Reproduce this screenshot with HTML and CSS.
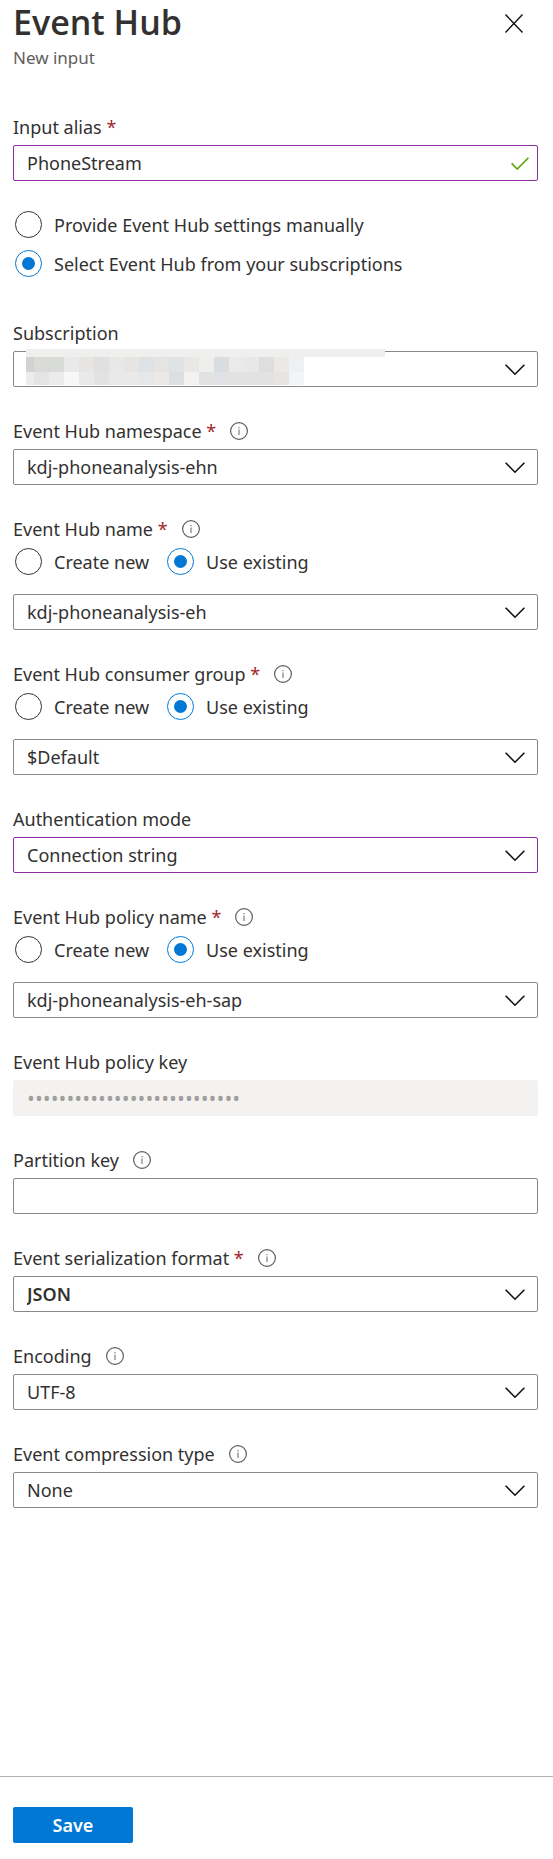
FILE: index.html
```html
<!DOCTYPE html>
<html lang="en">
<head>
<meta charset="utf-8">
<meta name="viewport" content="width=device-width, initial-scale=1">
<title>Event Hub - New input</title>
<link rel="stylesheet" href="styles.css">
</head>
<body>
<svg class="sprite" aria-hidden="true">
  <symbol id="info" viewBox="0 0 18 18">
    <circle cx="9" cy="9" r="8.4" fill="none" stroke="#605e5c" stroke-width="1.2"/>
    <path d="M9 7.5V13M9 5V6.3" fill="none" stroke="#8a8886" stroke-width="1.3"/>
  </symbol>
  <symbol id="chevron" viewBox="0 0 20 12">
    <path d="M0.6 0.8L10 10.2L19.4 0.8" fill="none" stroke="#111" stroke-width="1.6"/>
  </symbol>
</svg>
<form class="panel">
  <header class="header">
    <div>
      <h1 class="title">Event Hub</h1>
      <p class="subtitle">New input</p>
    </div>
    <button class="close" type="button" aria-label="Close">
      <svg width="18" height="19" viewBox="0 0 18 19"><path d="M0.5 0.5L17.5 18.5M17.5 0.5L0.5 18.5" fill="none" stroke="#111" stroke-width="1.4"/></svg>
    </button>
  </header>

  <main class="fields">
    <div class="field">
      <div class="caption"><label for="alias">Input alias <span class="required">*</span></label></div>
      <div class="control">
        <input class="box edited" id="alias" type="text" value="PhoneStream">
        <svg class="check" viewBox="0 0 18 13"><path d="M0.6 6.4L6.2 12L17.4 0.8" fill="none" stroke="#57a300" stroke-width="1.6"/></svg>
      </div>
    </div>

    <div class="choices stacked" role="radiogroup" aria-label="Event Hub settings">
      <label class="choice"><input class="radio" type="radio" name="source">Provide Event Hub settings manually</label>
      <label class="choice"><input class="radio" type="radio" name="source" checked>Select Event Hub from your subscriptions</label>
    </div>

    <div class="field">
      <div class="caption"><label for="subscription">Subscription</label></div>
      <div class="control">
        <select class="box" id="subscription"><option></option></select>
        <svg class="chevron"><use href="#chevron"/></svg>
        <svg class="redaction" width="359" height="36" viewBox="26 349 359 36" shape-rendering="crispEdges" aria-hidden="true">
          <path fill="#efefed" d="M26 349h359v8H26z"/>
          <path fill="#d2d2d0" d="M26 357h8v15h-8z"/>
          <path fill="#dadad8" d="M34 357h13v15H34z"/>
          <path fill="#d9dbd9" d="M47 357h17v15H47z"/>
          <path fill="#e9e9e9" d="M64 357h15v15H64z"/>
          <path fill="#e7e5e3" d="M79 357h15v15H79z"/>
          <path fill="#e0e0e0" d="M94 357h15v15H94z"/>
          <path fill="#e7e9e8" d="M109 357h15v15h-15z"/>
          <path fill="#e6e5e1" d="M124 357h15v15h-15z"/>
          <path fill="#dee2e5" d="M139 357h15v15h-15z"/>
          <path fill="#e4e4e2" d="M154 357h15v15h-15z"/>
          <path fill="#dfe3e4" d="M169 357h15v15h-15z"/>
          <path fill="#eae8e6" d="M184 357h15v15h-15z"/>
          <path fill="#eeeeec" d="M199 357h15v15h-15z"/>
          <path fill="#d9dde0" d="M214 357h15v15h-15z"/>
          <path fill="#eaeaea" d="M229 357h15v15h-15z"/>
          <path fill="#e7e9e8" d="M244 357h15v15h-15z"/>
          <path fill="#dededf" d="M259 357h15v15h-15z"/>
          <path fill="#ebe9e7" d="M274 357h15v15h-15z"/>
          <path fill="#eef0f2" d="M289 357h15v15h-15z"/>
          <path fill="#edecea" d="M26 372h8v13h-8z"/>
          <path fill="#e4e4e4" d="M34 372h15v13H34z"/>
          <path fill="#ebebeb" d="M49 372h15v13H49z"/>
          <path fill="#f7f7f7" d="M64 372h15v13H64z"/>
          <path fill="#e9e9e9" d="M79 372h15v13H79z"/>
          <path fill="#e2e2e2" d="M94 372h15v13H94z"/>
          <path fill="#e9e9e9" d="M109 372h15v13h-15z"/>
          <path fill="#ebe9e7" d="M124 372h15v13h-15z"/>
          <path fill="#e5e7e9" d="M139 372h15v13h-15z"/>
          <path fill="#ebe9e7" d="M154 372h15v13h-15z"/>
          <path fill="#dcdee0" d="M169 372h15v13h-15z"/>
          <path fill="#f3f2f0" d="M184 372h15v13h-15z"/>
          <path fill="#e2e2e2" d="M199 372h15v13h-15z"/>
          <path fill="#dfe1e4" d="M214 372h15v13h-15z"/>
          <path fill="#e2e2e2" d="M229 372h45v13h-45z"/>
          <path fill="#e7e5e3" d="M274 372h15v13h-15z"/>
          <path fill="#f2f4f6" d="M289 372h15v13h-15z"/>
        </svg>
      </div>
    </div>

    <div class="field">
      <div class="caption"><label for="namespace">Event Hub namespace <span class="required">*</span></label><svg class="info"><use href="#info"/></svg></div>
      <div class="control">
        <select class="box" id="namespace"><option>kdj-phoneanalysis-ehn</option></select>
        <svg class="chevron"><use href="#chevron"/></svg>
      </div>
    </div>

    <div class="field">
      <div class="caption"><label for="hub">Event Hub name <span class="required">*</span></label><svg class="info"><use href="#info"/></svg></div>
      <div class="choices">
        <label class="choice"><input class="radio" type="radio" name="hub-mode">Create new</label>
        <label class="choice"><input class="radio" type="radio" name="hub-mode" checked>Use existing</label>
      </div>
      <div class="control">
        <select class="box" id="hub"><option>kdj-phoneanalysis-eh</option></select>
        <svg class="chevron"><use href="#chevron"/></svg>
      </div>
    </div>

    <div class="field">
      <div class="caption"><label for="group">Event Hub consumer group <span class="required">*</span></label><svg class="info"><use href="#info"/></svg></div>
      <div class="choices">
        <label class="choice"><input class="radio" type="radio" name="group-mode">Create new</label>
        <label class="choice"><input class="radio" type="radio" name="group-mode" checked>Use existing</label>
      </div>
      <div class="control">
        <select class="box" id="group"><option>$Default</option></select>
        <svg class="chevron"><use href="#chevron"/></svg>
      </div>
    </div>

    <div class="field">
      <div class="caption"><label for="auth">Authentication mode</label></div>
      <div class="control">
        <select class="box edited" id="auth"><option>Connection string</option></select>
        <svg class="chevron"><use href="#chevron"/></svg>
      </div>
    </div>

    <div class="field">
      <div class="caption"><label for="policy">Event Hub policy name <span class="required">*</span></label><svg class="info"><use href="#info"/></svg></div>
      <div class="choices">
        <label class="choice"><input class="radio" type="radio" name="policy-mode">Create new</label>
        <label class="choice"><input class="radio" type="radio" name="policy-mode" checked>Use existing</label>
      </div>
      <div class="control">
        <select class="box" id="policy"><option>kdj-phoneanalysis-eh-sap</option></select>
        <svg class="chevron"><use href="#chevron"/></svg>
      </div>
    </div>

    <div class="field">
      <div class="caption"><label for="key">Event Hub policy key</label></div>
      <div class="control">
        <input class="box secret" id="key" type="password" value="abcdefghijklmnopqrstuvwxyz0" disabled>
      </div>
    </div>

    <div class="field">
      <div class="caption"><label for="partition">Partition key</label><svg class="info"><use href="#info"/></svg></div>
      <div class="control">
        <input class="box" id="partition" type="text">
      </div>
    </div>

    <div class="field">
      <div class="caption"><label for="format">Event serialization format <span class="required">*</span></label><svg class="info"><use href="#info"/></svg></div>
      <div class="control">
        <select class="box strong" id="format"><option>JSON</option></select>
        <svg class="chevron"><use href="#chevron"/></svg>
      </div>
    </div>

    <div class="field">
      <div class="caption"><label for="encoding">Encoding</label><svg class="info"><use href="#info"/></svg></div>
      <div class="control">
        <select class="box" id="encoding"><option>UTF-8</option></select>
        <svg class="chevron"><use href="#chevron"/></svg>
      </div>
    </div>

    <div class="field">
      <div class="caption"><label for="compression">Event compression type</label><svg class="info"><use href="#info"/></svg></div>
      <div class="control">
        <select class="box" id="compression"><option>None</option></select>
        <svg class="chevron"><use href="#chevron"/></svg>
      </div>
    </div>
  </main>

  <footer class="footer">
    <button class="save" type="button">Save</button>
  </footer>
</form>
</body>
</html>
```

FILE: styles.css
```css
* {
  box-sizing: border-box;
}

body {
  margin: 0;
  background: #fff;
  color: #323130;
  font-family: "Segoe UI", "Noto Sans", "Open Sans", sans-serif;
  font-size: 18px;
  line-height: 24px;
}

.sprite {
  display: none;
}

.panel {
  display: flex;
  flex-direction: column;
  min-height: 100vh;
}

.header {
  display: flex;
  justify-content: space-between;
  align-items: flex-start;
  padding: 0 28px 0 13px;
}

.title {
  margin: 0;
  font-family: "Segoe UI", "Open Sans", sans-serif;
  font-size: 34px;
  font-weight: 600;
  line-height: 44px;
}

.subtitle {
  margin: 2px 0 0;
  color: #605e5c;
  font-size: 17px;
}

.close {
  display: flex;
  margin-top: 12px;
  padding: 2px;
  border: 0;
  background: none;
}

.fields {
  display: flex;
  flex: 1;
  flex-direction: column;
  gap: 32px;
  padding: 45px 15px 32px 13px;
}

.caption {
  display: flex;
  align-items: center;
  gap: 14px;
  margin-bottom: 6px;
}

.required {
  color: #a4262c;
}

.info {
  width: 18px;
  height: 18px;
}

.control {
  position: relative;
}

.box {
  display: block;
  width: 100%;
  height: 36px;
  padding: 0 40px 0 13px;
  border: 1px solid #8a8886;
  border-radius: 2px;
  background: #fff;
  color: inherit;
  font: inherit;
  appearance: none;
}

.edited {
  border-color: #8a2da5;
}

.strong {
  font-weight: 600;
}

.secret {
  border-color: #f3f2f1;
  background: #f3f2f1;
  color: #a19f9d;
  font-family: "Open Sans", sans-serif;
  font-size: 21px;
}

.chevron {
  position: absolute;
  top: 13px;
  right: 13px;
  width: 20px;
  height: 12px;
  pointer-events: none;
}

.check {
  position: absolute;
  top: 12px;
  right: 9px;
  width: 18px;
  height: 13px;
}

.redaction {
  position: absolute;
  top: -2px;
  left: 13px;
  pointer-events: none;
}

.choices {
  display: flex;
  gap: 18px;
  margin: 7px 0 19px;
  padding-left: 2px;
}

.stacked {
  flex-direction: column;
  gap: 12px;
  margin: -2px 0 12px;
}

.choice {
  display: flex;
  align-items: center;
  gap: 12px;
  height: 27px;
}

.radio {
  display: grid;
  flex: none;
  place-content: center;
  width: 27px;
  height: 27px;
  margin: 0;
  border: 1px solid #323130;
  border-radius: 50%;
  appearance: none;
}

.radio:checked {
  border-color: #0078d4;
}

.radio:checked::before {
  width: 13px;
  height: 13px;
  border-radius: 50%;
  background: #0078d4;
  content: "";
}

.footer {
  padding: 30px 13px 16px;
  border-top: 1px solid #b3b3b3;
}

.save {
  display: block;
  width: 120px;
  height: 36px;
  padding: 0;
  border: 0;
  border-radius: 2px;
  background: #0078d4;
  color: #fff;
  font: inherit;
  font-weight: 600;
}
```
